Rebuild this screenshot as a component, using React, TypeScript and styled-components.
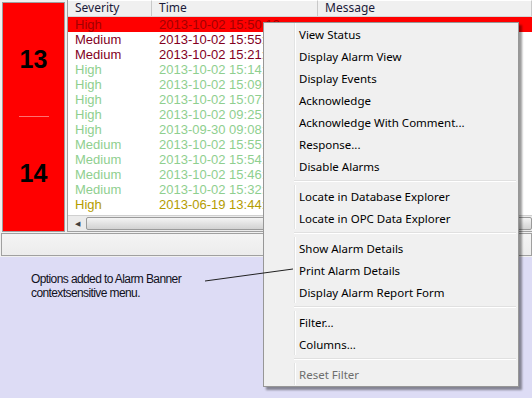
import React from "react";
import styled, { createGlobalStyle } from "styled-components";

type ALARM = {
  severity: string;
  time: string;
  tone: "active" | "unack" | "cleared" | "old";
};

const alarms: ALARM[] = [
  { severity: "High", time: "2013-10-02 15:50:12", tone: "active" },
  { severity: "Medium", time: "2013-10-02 15:55:40", tone: "unack" },
  { severity: "Medium", time: "2013-10-02 15:21:03", tone: "unack" },
  { severity: "High", time: "2013-10-02 15:14:22", tone: "cleared" },
  { severity: "High", time: "2013-10-02 15:09:51", tone: "cleared" },
  { severity: "High", time: "2013-10-02 15:07:18", tone: "cleared" },
  { severity: "High", time: "2013-10-02 09:25:44", tone: "cleared" },
  { severity: "High", time: "2013-09-30 09:08:10", tone: "cleared" },
  { severity: "Medium", time: "2013-10-02 15:55:31", tone: "cleared" },
  { severity: "Medium", time: "2013-10-02 15:54:02", tone: "cleared" },
  { severity: "Medium", time: "2013-10-02 15:46:27", tone: "cleared" },
  { severity: "Medium", time: "2013-10-02 15:32:09", tone: "cleared" },
  { severity: "High", time: "2013-06-19 13:44:55", tone: "old" },
];

const toneColor: Record<ALARM["tone"], string> = {
  active: "#a30000",
  unack: "#82001e",
  cleared: "#8fcf8f",
  old: "#b49c00",
};

const menuGroups: { label: string; disabled?: boolean }[][] = [
  [
    { label: "View Status" },
    { label: "Display Alarm View" },
    { label: "Display Events" },
    { label: "Acknowledge" },
    { label: "Acknowledge With Comment..." },
    { label: "Response..." },
    { label: "Disable Alarms" },
  ],
  [{ label: "Locate in Database Explorer" }, { label: "Locate in OPC Data Explorer" }],
  [{ label: "Show Alarm Details" }, { label: "Print Alarm Details" }, { label: "Display Alarm Report Form" }],
  [{ label: "Filter..." }, { label: "Columns..." }],
  [{ label: "Reset Filter", disabled: true }],
];

const GlobalStyle = createGlobalStyle`
  html, body {
    margin: 0;
    padding: 0;
    background: #dddcf5;
  }
  * {
    box-sizing: border-box;
  }
`;

const Page = styled.div`
  position: relative;
  width: 532px;
  height: 398px;
  overflow: hidden;
  display: flex;
  flex-direction: column;
  background: #dddcf5;
`;

const Window = styled.div`
  display: flex;
  flex-direction: column;
  background: #f0f0f0;
  height: 257px;
`;

const Top = styled.div`
  display: flex;
  gap: 2px;
  height: 232px;
`;

const Banner = styled.div`
  margin: 2px 0 0 2px;
  width: 63px;
  height: 230px;
  background: #ff0000;
  border: 1px solid #a0a0a0;
  display: flex;
  flex-direction: column;
  align-items: center;
`;

const Count = styled.div`
  height: 113px;
  display: flex;
  align-items: center;
  justify-content: center;
  font-family: "Liberation Sans", Arial, sans-serif;
  font-weight: bold;
  font-size: 25px;
  color: #000;
`;

const Divider = styled.div`
  width: 30px;
  height: 1px;
  background: #ff7070;
`;

const Grid = styled.div`
  flex: 1;
  display: flex;
  flex-direction: column;
  background: #fff;
  border-left: 1px solid #a0a0a0;
  border-bottom: 1px solid #a0a0a0;
  overflow: hidden;
`;

const HeaderRow = styled.div`
  display: flex;
  height: 17px;
  border-bottom: 1px solid #d5d5d5;
  background: #f0f0f0;
`;

const HeaderCell = styled.div<{ $width?: number }>`
  ${(p) => (p.$width ? `width: ${p.$width}px;` : "flex: 1;")}
  flex-shrink: 0;
  padding-left: 7px;
  border-right: 1px solid #c8c8c8;
  border-top: 1px solid #fff;
  font-family: "Noto Sans", "Open Sans", sans-serif;
  font-size: 12px;
  line-height: 14px;
  color: #1b1b3a;
  white-space: nowrap;
`;

const Rows = styled.div`
  display: flex;
  flex-direction: column;
  height: 196px;
`;

const Row = styled.div<{ $selected?: boolean; $color: string }>`
  display: flex;
  height: 15px;
  background: ${(p) => (p.$selected ? "#ff0000" : "#fff")};
  color: ${(p) => p.$color};
  font-family: "Liberation Sans", Arial, sans-serif;
  font-size: 13px;
  line-height: 15px;
  white-space: nowrap;
`;

const Cell = styled.div<{ $width?: number }>`
  ${(p) => (p.$width ? `width: ${p.$width}px;` : "flex: 1;")}
  flex-shrink: 0;
  padding-left: 7px;
  overflow: hidden;
`;

const HScroll = styled.div`
  margin-top: 2px;
  display: flex;
  height: 16px;
  background: #ebebeb;
  border-top: 1px solid #d0d0d0;
`;

const ScrollButton = styled.div`
  width: 18px;
  display: flex;
  align-items: center;
  justify-content: center;
  font-size: 7px;
  color: #404040;
`;

const ScrollThumb = styled.div`
  flex: 1;
  margin: 1px 0;
  border: 1px solid #9a9a9a;
  border-radius: 2px;
  background: linear-gradient(#f4f4f4, #e2e2e2 50%, #d2d2d2);
`;

const StatusBar = styled.div`
  margin: 1px 0 0 1px;
  height: 23px;
  background: linear-gradient(#f4f4f4, #ececec);
  border: 1px solid #a0a0a0;
`;

const NoteArea = styled.div`
  flex: 1;
  padding: 15px 0 0 31px;
`;

const Caption = styled.p`
  margin: 0;
  font-family: "Liberation Sans", Arial, sans-serif;
  font-size: 12px;
  line-height: 14px;
  letter-spacing: -0.6px;
  color: #101020;
`;

const Menu = styled.div`
  position: absolute;
  left: 263px;
  top: 22px;
  width: 256px;
  padding: 0 2px 1px 1px;
  background: #f0f0f0;
  border: 1px solid #979797;
  box-shadow: 3px 3px 2px rgba(0, 0, 0, 0.4);
  font-family: "Noto Sans", "Open Sans", sans-serif;
  font-size: 11.5px;
  color: #000;
`;

const MenuGroup = styled.div`
  display: flex;
  flex-direction: column;
`;

const MenuSeparator = styled.div`
  margin: 3px 0 3px 29px;
  height: 2px;
  border-top: 1px solid #e0e0e0;
  border-bottom: 1px solid #fff;
`;

const MenuItem = styled.div<{ $disabled?: boolean }>`
  height: 22px;
  display: flex;
  align-items: center;
  padding-left: 33px;
  color: ${(p) => (p.$disabled ? "#6d6d6d" : "#000")};
  border-left: 1px solid transparent;
  background: linear-gradient(to right, transparent 28px, #e2e3e3 28px, #e2e3e3 29px, #fff 29px, #fff 30px, transparent 30px);
`;

const Leader = styled.svg`
  position: absolute;
  left: 0;
  top: 0;
  pointer-events: none;
`;

export default function App(): JSX.Element {
  return (
    <>
      <GlobalStyle />
      <Page>
        <Window>
          <Top>
            <Banner>
              <Count>13</Count>
              <Divider />
              <Count>14</Count>
            </Banner>
            <Grid>
              <HeaderRow>
                <HeaderCell $width={84}>Severity</HeaderCell>
                <HeaderCell $width={166}>Time</HeaderCell>
                <HeaderCell>Message</HeaderCell>
              </HeaderRow>
              <Rows>
                {alarms.map((alarm, index) => {
                  return (
                    <Row key={index} $selected={alarm.tone === "active"} $color={toneColor[alarm.tone]}>
                      <Cell $width={84}>{alarm.severity}</Cell>
                      <Cell $width={166}>{alarm.time}</Cell>
                      <Cell />
                    </Row>
                  );
                })}
              </Rows>
              <HScroll>
                <ScrollButton>◀</ScrollButton>
                <ScrollThumb />
              </HScroll>
            </Grid>
          </Top>
          <StatusBar />
        </Window>
        <NoteArea>
          <Caption>
            Options added to Alarm Banner
            <br />
            contextsensitive menu.
          </Caption>
        </NoteArea>
        <Menu>
          {menuGroups.map((group, index) => {
            return (
              <React.Fragment key={index}>
                {index > 0 && <MenuSeparator />}
                <MenuGroup>
                  {group.map((item) => (
                    <MenuItem key={item.label} $disabled={item.disabled}>
                      {item.label}
                    </MenuItem>
                  ))}
                </MenuGroup>
              </React.Fragment>
            );
          })}
        </Menu>
        <Leader width={532} height={398}>
          <line x1={205} y1={281} x2={293} y2={269} stroke="#202020" strokeWidth={1} />
        </Leader>
      </Page>
    </>
  );
}
